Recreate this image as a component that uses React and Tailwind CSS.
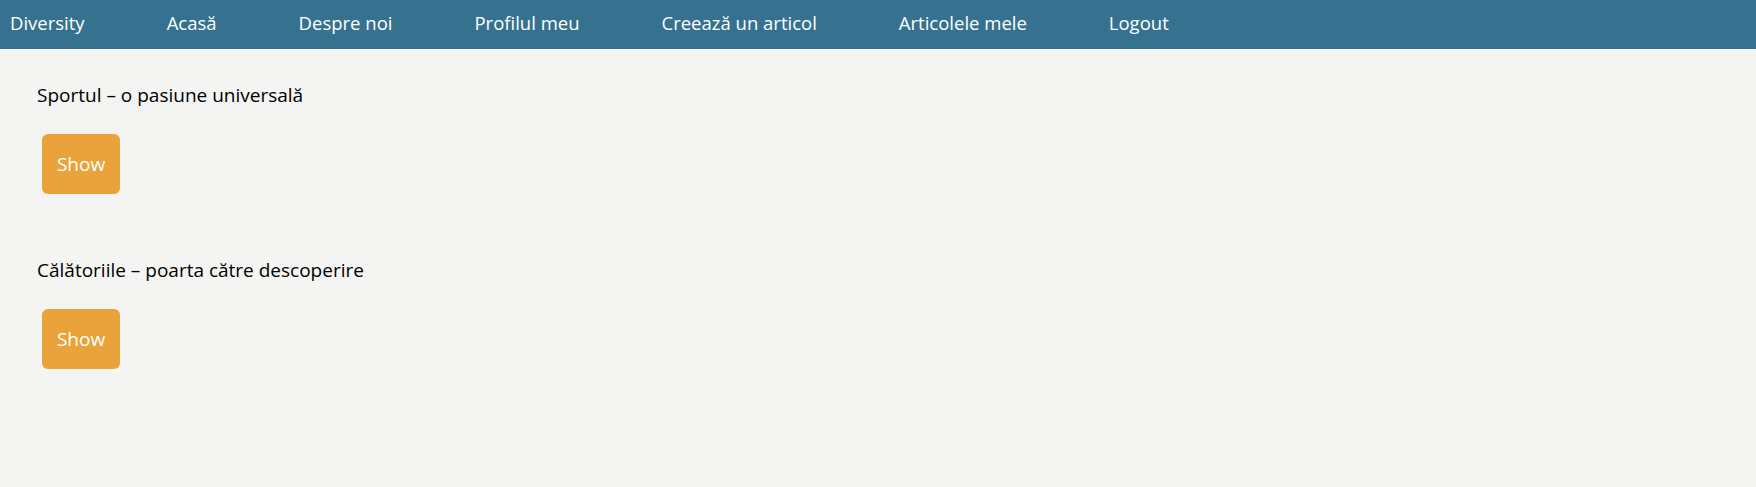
export default function App() {
  const font = { fontFamily: '"Open Sans", "Noto Sans", sans-serif' };
  const links = ["Diversity", "Acasă", "Despre noi", "Profilul meu", "Creează un articol", "Articolele mele", "Logout"];
  const articles = ["Sportul – o pasiune universală", "Călătoriile – poarta către descoperire"];
  return (
    <div className="min-h-[487px] bg-[#f4f4f2]" style={font}>
      <nav className="h-[49px] bg-[#36728f] flex items-center pl-[10px] pb-[3px] text-white text-[18.5px] gap-[82px]">
        {links.map((l) => (
          <a key={l} className="cursor-pointer">{l}</a>
        ))}
      </nav>
      <main className="pl-[37px] pt-[33px]">
        {articles.map((a) => (
          <div key={a} className="h-[175px]">
            <div className="text-[19px] text-black leading-[26px]">{a}</div>
            <button className="mt-[26px] ml-[5px] w-[78px] h-[60px] rounded-[6px] bg-[#eaa33b] text-white text-[19px]">
              Show
            </button>
          </div>
        ))}
      </main>
    </div>
  );
}
